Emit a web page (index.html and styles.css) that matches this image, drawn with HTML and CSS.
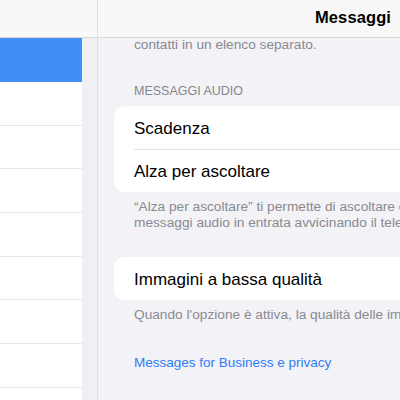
FILE: index.html
```html
<!DOCTYPE html>
<html lang="it">
<head>
<meta charset="utf-8">
<title>Messaggi</title>
<link rel="stylesheet" href="styles.css">
</head>
<body>
<div class="app">
  <aside class="sidebar">
    <div class="sidebar-header"></div>
    <div class="sidebar-list">
      <div class="side-row selected"></div>
      <div class="side-row"></div>
      <div class="side-row"></div>
      <div class="side-row"></div>
      <div class="side-row"></div>
      <div class="side-row"></div>
      <div class="side-row"></div>
      <div class="side-row"></div>
    </div>
  </aside>
  <main class="detail">
    <header class="detail-header"><h1 class="title">Messaggi</h1></header>
    <div class="content">
      <p class="footer first">contatti in un elenco separato.</p>
      <h2 class="section-title">Messaggi audio</h2>
      <div class="card">
        <div class="cell"><span class="cell-label">Scadenza</span></div>
        <div class="cell"><span class="cell-label">Alza per ascoltare</span></div>
      </div>
      <p class="footer">“Alza per ascoltare” ti permette di ascoltare e rispondere ai<br>messaggi audio in entrata avvicinando il telefono all'orecchio.</p>
      <div class="card card-2">
        <div class="cell"><span class="cell-label">Immagini a bassa qualità</span></div>
      </div>
      <p class="footer">Quando l'opzione è attiva, la qualità delle immagini inviate sarà inferiore.</p>
      <a class="link" href="#">Messages for Business e privacy</a>
    </div>
  </main>
</div>
</body>
</html>
```
FILE: styles.css
```css
* { box-sizing: border-box; }
html, body { margin: 0; padding: 0; }
body {
  width: 400px;
  height: 400px;
  overflow: hidden;
  background: #f2f2f7;
  font-family: "Liberation Sans", Arial, sans-serif;
  color: #000;
}
.app {
  display: flex;
  height: 400px;
}
.sidebar {
  flex: none;
  width: 98px;
  background: #efeff4;
  border-right: 1px solid #dedee3;
  display: flex;
  flex-direction: column;
}
.sidebar-header {
  height: 38px;
  background: #f8f8f9;
  border-bottom: 1px solid #d9d9dd;
}
.sidebar-list {
  margin-right: 15px;
  background: #fff;
  flex: 1;
}
.side-row {
  height: 43.7px;
  border-bottom: 1px solid #e8e8ec;
}
.side-row.selected {
  height: 44px;
  background: #3f8ff7;
  border-bottom: none;
}
.detail {
  flex: none;
  width: 510px;
  background: #f2f2f7;
}
.detail-header {
  height: 38px;
  background: #f8f8f9;
  border-bottom: 1px solid #d9d9dd;
}
.title {
  margin: 0;
  text-align: center;
  font-size: 16.5px;
  font-weight: 700;
  line-height: 35px;
  letter-spacing: 0.1px;
}
.content {
  padding: 0 16px;
}
.footer {
  margin: 7px 0 0;
  padding: 0 20px;
  font-size: 13.7px;
  line-height: 16px;
  color: #8a8a8e;
  white-space: nowrap;
}
.footer.first {
  margin-top: -1.5px;
}
.section-title {
  margin: 30px 0 7.5px;
  padding: 0 20px;
  font-size: 12.5px;
  font-weight: 400;
  line-height: 16px;
  text-transform: uppercase;
  color: #86868b;
}
.card {
  background: #fff;
  border-radius: 10px;
  overflow: hidden;
}
.card-2 {
  margin-top: 26px;
}
.cell {
  height: 43px;
  padding-left: 20px;
  display: flex;
  align-items: center;
  position: relative;
}
.cell + .cell::before {
  content: "";
  position: absolute;
  left: 20px;
  right: 0;
  top: 0;
  border-top: 1px solid #e3e3e8;
}
.cell-label {
  font-size: 17px;
  line-height: 21px;
  padding-top: 1px;
}
.link {
  display: block;
  margin-top: 32px;
  padding: 0 20px;
  font-size: 13.5px;
  line-height: 16px;
  color: #2f7cf6;
  text-decoration: none;
}
```
